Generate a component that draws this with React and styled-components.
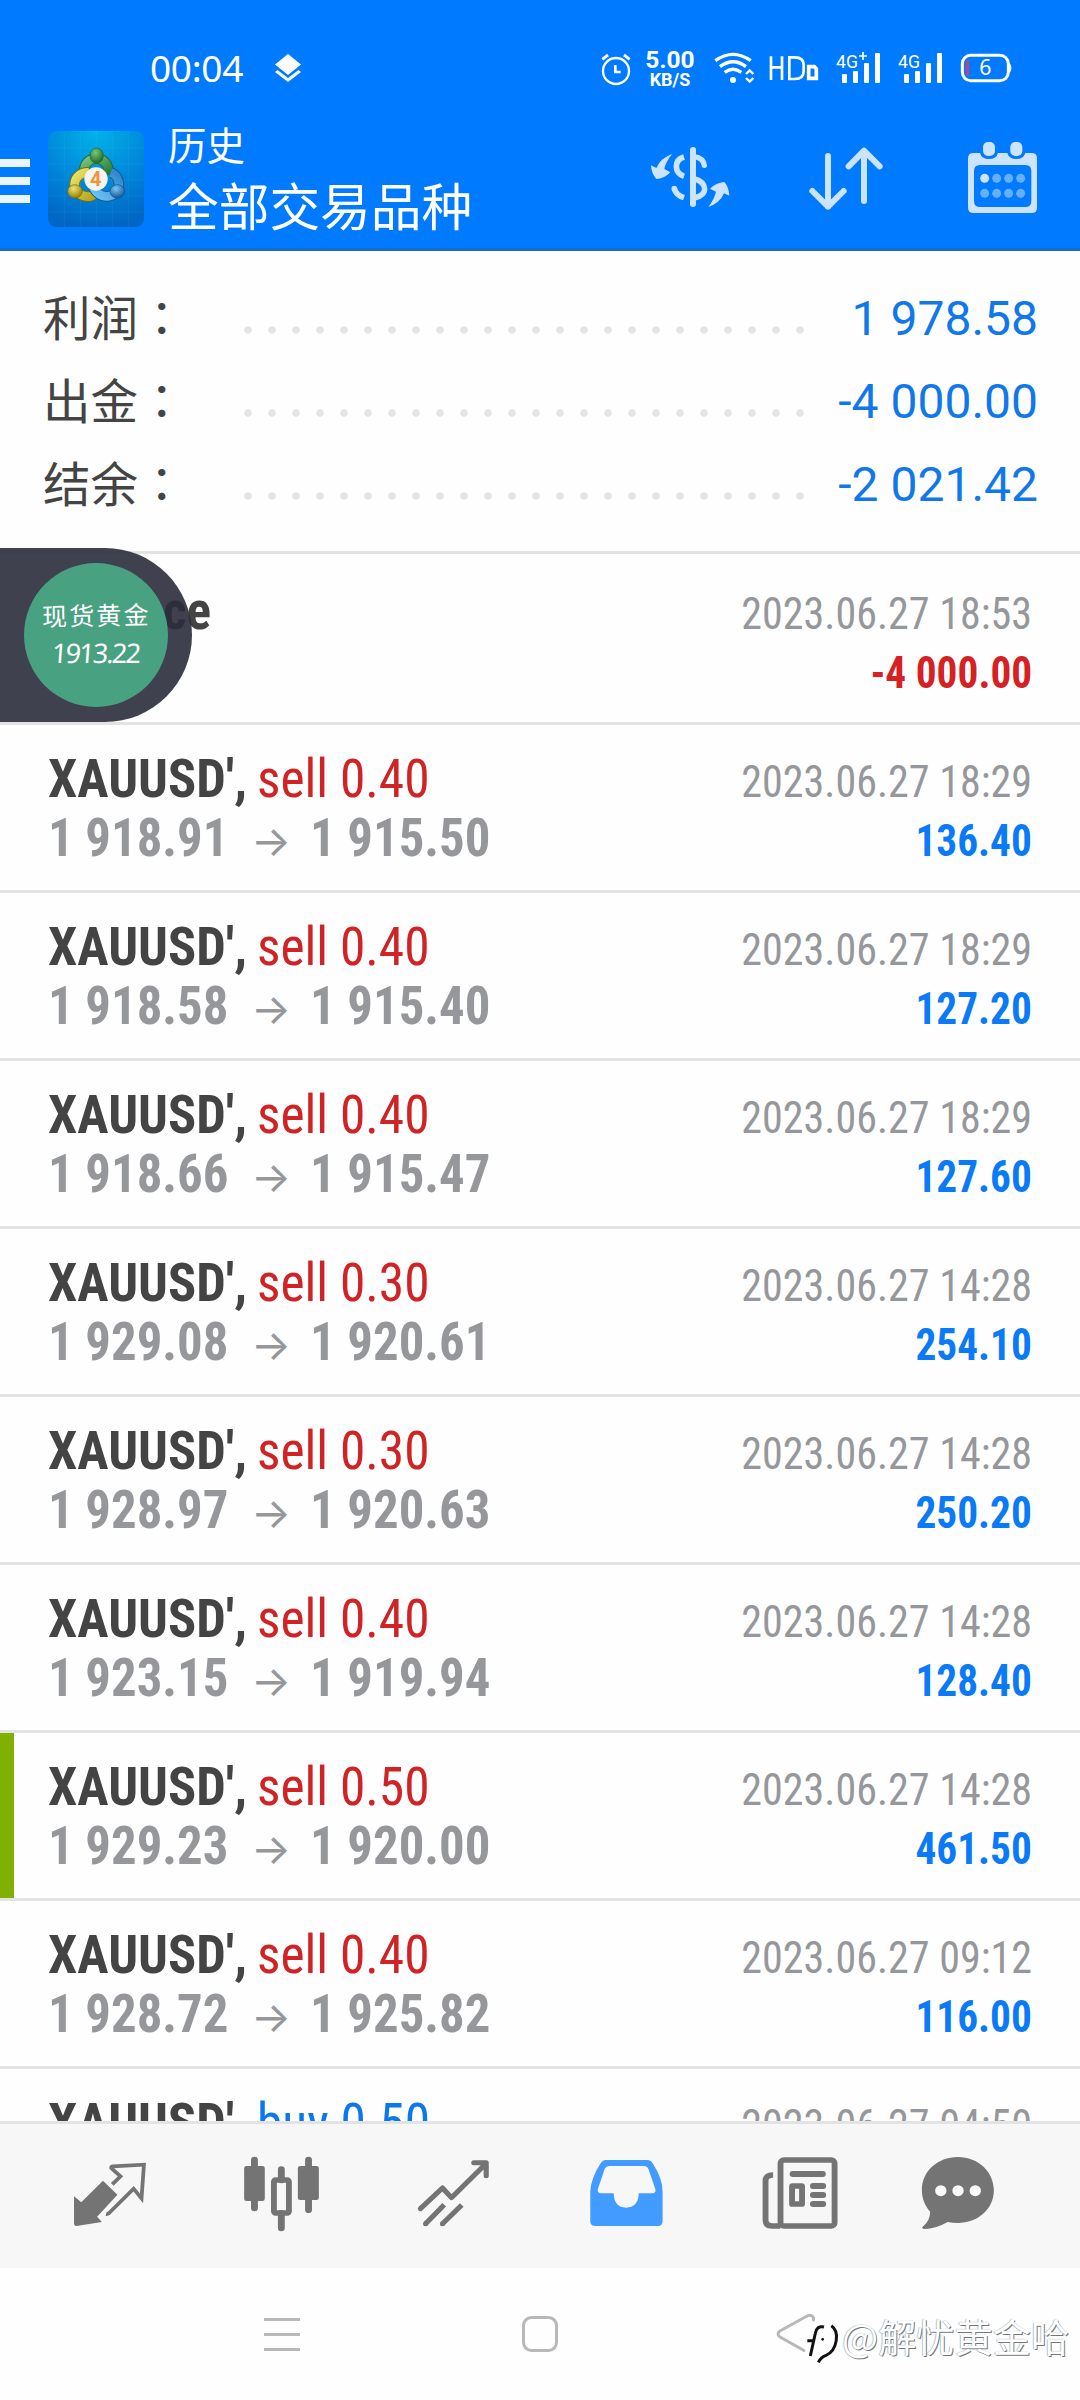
import React from "react";
import styled, { createGlobalStyle } from "styled-components";

const cjk = '"Noto Sans CJK SC", "Noto Sans", sans-serif';
const condensed = '"Roboto Condensed", Roboto, "Noto Sans", sans-serif';

const Global = createGlobalStyle`
  * { box-sizing: border-box; }
  html, body { margin: 0; padding: 0; }
  body { width: 1080px; height: 2400px; overflow: hidden; background: #fdfdfd; }
  svg { display: block; flex: none; }
`;

const Screen = styled.div`
  position: relative;
  width: 1080px;
  height: 2400px;
  display: flex;
  flex-direction: column;
  overflow: hidden;
  background: #fefefe;
  font-family: ${cjk};
`;

/* ---------- header ---------- */
const Header = styled.header`
  flex: none;
  height: 251px;
  background: #007aff;
  border-bottom: 3px solid #1b6cc8;
  color: #fff;
`;

const StatusBar = styled.div`
  height: 104px;
  padding: 40px 60px 0 150px;
  display: flex;
`;

const Clock = styled.div`
  width: 120px;
  font: 400 37px/55px "Noto Sans", sans-serif;
  letter-spacing: -0.3px;
`;

const Spacer = styled.div`
  flex: 1;
`;

const NetSpeed = styled.div`
  width: 64px;
  display: flex;
  flex-direction: column;
  align-items: center;
  padding-top: 8px;
  font-family: Roboto, sans-serif;
  font-weight: 700;
`;

const SpeedValue = styled.span`
  font-size: 24.5px;
  line-height: 23px;
`;

const SpeedUnit = styled.span`
  font-size: 18px;
  line-height: 18px;
`;

const Toolbar = styled.div`
  height: 144px;
  display: flex;
  align-items: flex-start;
`;

const MenuButton = styled.div`
  width: 48px;
  padding-top: 55px;
  display: flex;
  flex-direction: column;
  gap: 10px;
`;

const MenuLine = styled.i`
  width: 30px;
  height: 8px;
  background: #ebf5ff;
`;

const LogoBox = styled.div`
  padding-top: 27px;
  width: 120px;
`;

const Titles = styled.div`
  width: 462px;
  padding-top: 12px;
  display: flex;
  flex-direction: column;
`;

const Caption = styled.span`
  font-size: 38.5px;
  line-height: 55px;
`;

const Title = styled.span`
  font-size: 50.7px;
  line-height: 66px;
`;

/* ---------- summary ---------- */
const Summary = styled.section`
  flex: none;
  height: 303px;
  padding: 26px 42px 0 43px;
  border-bottom: 3px solid #e3e3e4;
`;

const SummaryRow = styled.div`
  height: 83px;
  display: flex;
  align-items: flex-start;
`;

const SummaryLabel = styled.span`
  width: 201px;
  margin-top: -3px;
  color: #444;
  font-size: 47.5px;
  line-height: 83px;
`;

const Colon = styled.span`
  font-family: "Noto Sans CJK TC", sans-serif;
`;

const Leader = styled.div`
  width: 576px;
  height: 8px;
  margin: 49px 0 0 -8px;
  background: radial-gradient(circle at 12px 4px, #e4e4e4 3.4px, transparent 4.1px) 0 0 / 24px 8px repeat-x;
`;

const SummaryValue = styled.span`
  flex: 1;
  text-align: right;
  white-space: nowrap;
  color: #1078ea;
  font: 400 48px/83px Roboto, sans-serif;
`;

/* ---------- deals ---------- */
const Deals = styled.main`
  flex: none;
  height: 1567px;
  overflow: hidden;
`;

const DealRow = styled.div`
  height: ${(p) => (p.$tall ? 171 : 168)}px;
  padding: ${(p) => (p.$tall ? 27 : 24)}px 48px 0 48px;
  border-bottom: 3px solid #e3e3e4;
  display: flex;
  justify-content: space-between;
  white-space: pre;
  font-family: ${condensed};
  font-stretch: 75%;
  ${(p) => p.$marked && "box-shadow: inset 14px 0 0 #80b000;"}
`;

const Column = styled.div`
  display: flex;
  flex-direction: column;
  align-items: ${(p) => (p.$end ? "flex-end" : "flex-start")};
  padding-top: ${(p) => (p.$end ? 3 : 0)}px;
`;

const Line = styled.div`
  height: 59px;
  display: flex;
  align-items: baseline;
  line-height: 59px;
`;

const Narrow = styled.span`
  display: inline-block;
  transform: scaleX(${(p) => p.$fit || 0.94});
  transform-origin: left;
`;

const Symbol = styled(Narrow)`
  width: 209px;
  font-size: 54px;
  font-weight: 700;
  color: #444;
`;

const Side = styled(Narrow)`
  font-size: 54px;
  color: ${(p) => (p.$buy ? "#0b78ee" : "#cf2325")};
`;

const Price = styled(Narrow)`
  width: 184px;
  font-size: 54px;
  font-weight: 700;
  color: #95979b;
`;

const Arrow = styled.span`
  width: 78px;
  text-align: center;
  color: #95979b;
  font-family: Inter, sans-serif;
  font-size: 42px;
`;

const DealTime = styled(Narrow)`
  transform-origin: right;
  font-size: 45px;
  color: #95979b;
`;

const Amount = styled(Narrow)`
  transform-origin: right;
  font-size: 45px;
  font-weight: 700;
  color: ${(p) => (p.$loss ? "#d52123" : "#0a7af6")};
`;

/* ---------- floating quote ---------- */
const QuoteBubble = styled.aside`
  position: absolute;
  left: 0;
  top: 548px;
  width: 192px;
  height: 174px;
  padding: 15px 24px;
  border-radius: 0 87px 87px 0;
  background: rgba(42, 46, 59, 0.9);
`;

const QuoteDisc = styled.div`
  width: 144px;
  height: 144px;
  border-radius: 50%;
  background: #48a181;
  color: #fff;
  display: flex;
  flex-direction: column;
  align-items: center;
  padding-top: 33px;
`;

const QuoteName = styled.span`
  font-size: 25px;
  line-height: 36px;
  letter-spacing: 2.2px;
  transform: rotate(-1deg);
`;

const QuotePrice = styled.span`
  font: 400 27px/42px "Noto Sans", sans-serif;
  letter-spacing: -1.8px;
  transform: skewX(-4deg);
`;

/* ---------- bottom ---------- */
const TabBar = styled.nav`
  flex: none;
  height: 147px;
  border-top: 3px solid #e3e3e4;
  padding-left: 24px;
  background: #f7f7f7;
  color: #747474;
  display: flex;
`;

const SystemBar = styled.nav`
  flex: 1;
  display: flex;
  padding: 45px 0 0 258px;
  gap: 208px;
  color: #b8b8b8;
`;

const Watermark = styled.div`
  position: absolute;
  left: 804px;
  top: 2308px;
  display: flex;
  align-items: center;
  color: #fff;
  font-size: 38.2px;
  line-height: 56px;
  white-space: nowrap;
  text-shadow: 1px 1px 0 #777, -0.5px -0.5px 1px #999;
`;

const Logo = () => (
  <svg width="96" height="96" viewBox="24 18 288 288">
    <defs>
      <radialGradient id="sky" cx="0.5" cy="0" r="1">
        <stop offset="0" stopColor="#00b4e8" />
        <stop offset="0.5" stopColor="#008bdc" />
        <stop offset="1" stopColor="#0066c4" />
      </radialGradient>
      <linearGradient id="green" x1="0" y1="0" x2="1" y2="1">
        <stop offset="0" stopColor="#7cc47a" />
        <stop offset="1" stopColor="#1f7a33" />
      </linearGradient>
      <linearGradient id="yellow" x1="0" y1="0" x2="1" y2="1">
        <stop offset="0" stopColor="#ebe468" />
        <stop offset="1" stopColor="#b3a012" />
      </linearGradient>
      <linearGradient id="blue" x1="1" y1="0" x2="0" y2="1">
        <stop offset="0" stopColor="#2d86cc" />
        <stop offset="1" stopColor="#6fc4f4" />
      </linearGradient>
      <radialGradient id="gh" cx="0.4" cy="0.3" r="0.7"><stop offset="0" stopColor="#7cc777" /><stop offset="1" stopColor="#1d6b2b" /></radialGradient>
      <radialGradient id="yh" cx="0.4" cy="0.3" r="0.7"><stop offset="0" stopColor="#f0e56a" /><stop offset="1" stopColor="#92800d" /></radialGradient>
      <radialGradient id="bh" cx="0.4" cy="0.3" r="0.7"><stop offset="0" stopColor="#7cc6f2" /><stop offset="1" stopColor="#125a9c" /></radialGradient>
    </defs>
    <rect x="24" y="18" width="288" height="288" rx="26" fill="url(#sky)" />
    <path d="M73 18V306M121 18V306M169 18V306M217 18V306M265 18V306M24 69H312M24 117H312M24 165H312M24 213H312M24 261H312" stroke="#8fd4ff" strokeOpacity="0.13" strokeWidth="2" />
    <g fill="none">
      <path d="M133 142C128 88 212 84 206 150" stroke="#1e6a3a" strokeWidth="32" />
      <path d="M133 142C128 88 212 84 206 150" stroke="url(#green)" strokeWidth="26" />
      <path d="M146 142C98 140 86 204 136 214Q156 218 170 202" stroke="#77700f" strokeWidth="32" />
      <path d="M146 142C98 140 86 204 136 214Q156 218 170 202" stroke="url(#yellow)" strokeWidth="26" />
      <path d="M212 142C246 154 246 212 202 214Q176 216 160 188" stroke="#125b98" strokeWidth="32" />
      <path d="M212 142C246 154 246 212 202 214Q176 216 160 188" stroke="url(#blue)" strokeWidth="26" />
    </g>
    <ellipse cx="170" cy="92" rx="20" ry="23" fill="url(#gh)" stroke="#1e6a2e" strokeWidth="2" />
    <ellipse cx="105" cy="199" rx="22" ry="20" fill="url(#yh)" stroke="#776a0c" strokeWidth="2" />
    <ellipse cx="232" cy="199" rx="22" ry="20" fill="url(#bh)" stroke="#124f88" strokeWidth="2" />
    <circle cx="168" cy="162" r="35" fill="#f4f4f2" />
    <text x="167" y="183" textAnchor="middle" fontFamily="Roboto, sans-serif" fontWeight="700" fontSize="60" fill="#f0953c">4</text>
  </svg>
);

/* Status glyphs share one 3:1 drawing grid, 192 units high. */
const StatusGlyph = ({ x, w, children }) => (
  <svg width={w} height="64" viewBox={`${(x - 590) * 3} 0 ${w * 3} 192`} fill="none" stroke="#fff">
    {children}
  </svg>
);

const Bars = ({ x }) => (
  <g fill="#fff" stroke="none">
    <rect x={x} y="102" width="15" height="27" rx="3" />
    <rect x={x + 33} y="93" width="15" height="36" rx="3" />
    <rect x={x + 66} y="69" width="15" height="60" rx="3" />
    <rect x={x + 99} y="39" width="15" height="90" rx="3" />
  </g>
);

const ActionGlyph = ({ x, w, children }) => (
  <svg width={w} height="144" viewBox={`${(x - 590) * 3} 192 ${w * 3} 432`} fill="none" stroke="#cce4ff">
    {children}
  </svg>
);

/* Tab glyphs: 172 x 144 tiles on a 499.5 x 432 grid. */
const Tab = ({ x, color = "#747474", children }) => (
  <svg width="172" height="144" viewBox={`${x} 222 499.5 432`} preserveAspectRatio="none" fill="none" stroke={color} color={color}>
    {children}
  </svg>
);

const summary = [
  ["利润", "1 978.58"],
  ["出金", "-4 000.00"],
  ["结余", "-2 021.42"],
];

const deals = [
  ["sell 0.40", "1 918.91", "1 915.50", "2023.06.27 18:29", "136.40"],
  ["sell 0.40", "1 918.58", "1 915.40", "2023.06.27 18:29", "127.20"],
  ["sell 0.40", "1 918.66", "1 915.47", "2023.06.27 18:29", "127.60"],
  ["sell 0.30", "1 929.08", "1 920.61", "2023.06.27 14:28", "254.10"],
  ["sell 0.30", "1 928.97", "1 920.63", "2023.06.27 14:28", "250.20"],
  ["sell 0.40", "1 923.15", "1 919.94", "2023.06.27 14:28", "128.40"],
  ["sell 0.50", "1 929.23", "1 920.00", "2023.06.27 14:28", "461.50"],
  ["sell 0.40", "1 928.72", "1 925.82", "2023.06.27 09:12", "116.00"],
  ["buy 0.50", "", "", "2023.06.27 04:50", ""],
];

export default function App() {
  return (
    <Screen>
      <Global />
      <Header>
        <StatusBar>
          <Clock>00:04</Clock>
          <svg width="36" height="64" viewBox="0 0 36 64" fill="#fff">
            <path d="M18 14L31 24.5L18 35L5 24.5Z" />
            <path d="M5 32L7.5 30L18 38L28.500 30L31 32L18 42Z" />
          </svg>
          <Spacer />
          <StatusGlyph x={596} w={42}>
            <circle cx="78" cy="93" r="39" strokeWidth="7" />
            <path d="M37 58L54 45M119 58L102 45" strokeWidth="9" />
            <path d="M76 75V96H92" strokeWidth="8" />
          </StatusGlyph>
          <NetSpeed>
            <SpeedValue>5.00</SpeedValue>
            <SpeedUnit>KB/S</SpeedUnit>
          </NetSpeed>
          <StatusGlyph x={702} w={62}>
            <path d="M376 62Q429 24 482 62M390 80Q429 50 468 80M404 97Q429 78 454 97" strokeWidth="10" />
            <circle cx="429" cy="120" r="9" fill="#fff" stroke="none" />
            <path d="M468 102L479 91L490 102M468 114L479 125L490 114" strokeWidth="7" />
          </StatusGlyph>
          <StatusGlyph x={764} w={66}>
            <path d="M543 49V120M576 49V120M543 82H576M598 52V117H614Q641 117 641 94V75Q641 52 614 52Z" strokeWidth="8" />
            <path d="M656 80H673L679 86V115H656Z" strokeWidth="11" />
          </StatusGlyph>
          <StatusGlyph x={830} w={62}>
            <text x="738" y="83" fontFamily="Roboto, sans-serif" fontSize="57" textLength="66" lengthAdjust="spacingAndGlyphs" fill="#fff" stroke="none">4G</text>
            <path d="M807 48H831M819 36V60" strokeWidth="5" />
            <Bars x={756} />
          </StatusGlyph>
          <StatusGlyph x={892} w={60}>
            <text x="924" y="83" fontFamily="Roboto, sans-serif" fontSize="57" textLength="66" lengthAdjust="spacingAndGlyphs" fill="#fff" stroke="none">4G</text>
            <Bars x={942} />
          </StatusGlyph>
          <StatusGlyph x={952} w={68}>
            <rect x="1117" y="46" width="138" height="76" rx="25" strokeWidth="9" />
            <path d="M1137 58Q1126 61 1126 72V96Q1126 107 1137 110Z" fill="#a84a86" stroke="none" />
            <path d="M1257 70Q1264 72 1264 84Q1264 96 1257 98Z" fill="#fff" stroke="none" />
            <text x="1186" y="106" textAnchor="middle" fontFamily="Noto Sans, sans-serif" fontSize="64" fill="#fff" stroke="none">6</text>
          </StatusGlyph>
        </StatusBar>
        <Toolbar>
          <MenuButton>
            <MenuLine />
            <MenuLine />
            <MenuLine />
          </MenuButton>
          <LogoBox>
            <Logo />
          </LogoBox>
          <Titles>
            <Caption>历史</Caption>
            <Title>全部交易品种</Title>
          </Titles>
          <ActionGlyph x={630} w={120}>
            <path d="M309 330V492" strokeWidth="18" strokeLinecap="round" />
            <path d="M282 351Q259 358 259 379Q259 401 282 409M253 446Q258 465 282 473" strokeWidth="17" />
            <circle cx="253" cy="446" r="8.500" fill="#cce4ff" stroke="none" />
            <path d="M312 350Q340 354 343 376" strokeWidth="16" strokeLinecap="round" />
            <path d="M312 416Q343 424 344 447Q344 466 313 474" strokeWidth="17" />
            <path d="M246 342Q226 368 223 387L241 397Q222 417 199 417Q184 400 183 376L199 384Q212 354 246 342Z" fill="#cce4ff" stroke="none" />
            <path d="M355 501Q373 477 378 455L360 446Q378 428 403 426Q416 440 418 467L402 460Q390 489 355 501Z" fill="#cce4ff" stroke="none" />
          </ActionGlyph>
          <ActionGlyph x={750} w={180}>
            <path d="M714 348V500M667 453L714 500L761 453M822 483V332M776 379L822 332L869 379" strokeWidth="18" strokeLinecap="round" strokeLinejoin="round" />
          </ActionGlyph>
          <ActionGlyph x={930} w={150}>
            <path d="M1151 339H1170Q1175 357 1197 357Q1219 357 1224 339H1252Q1257 357 1279 357Q1301 357 1306 339H1325Q1341 339 1341 355V503Q1341 519 1325 519H1151Q1134 519 1134 503V355Q1134 339 1151 339ZM1170 375Q1152 375 1152 393V483Q1152 501 1170 501H1306Q1324 501 1324 483V393Q1324 375 1306 375Z" fill="#cce4ff" fillRule="evenodd" stroke="none" />
            <rect x="1179" y="306" width="36" height="42" rx="15" fill="#cce4ff" stroke="none" />
            <rect x="1261" y="306" width="36" height="42" rx="15" fill="#cce4ff" stroke="none" />
            {[0, 1, 2, 3, 4, 5, 6, 7].map((i) => (
              <circle key={i} cx={1184 + (i % 4) * 36} cy={i < 4 ? 415 : 460} r="13.5" fill={i ? "#66afff" : "#cce4ff"} stroke="none" />
            ))}
          </ActionGlyph>
        </Toolbar>
      </Header>

      <Summary>
        {summary.map(([label, value]) => (
          <SummaryRow key={label}>
            <SummaryLabel>{label}<Colon lang="zh-TW">：</Colon></SummaryLabel>
            <Leader />
            <SummaryValue>{value}</SummaryValue>
          </SummaryRow>
        ))}
      </Summary>

      <Deals>
        <DealRow $tall>
          <Column>
            <Line><Symbol $fit={0.948}>Balance</Symbol></Line>
          </Column>
          <Column $end>
            <Line><DealTime $fit={0.935}>2023.06.27 18:53</DealTime></Line>
            <Line><Amount $loss $fit={0.918}>-4 000.00</Amount></Line>
          </Column>
        </DealRow>
        {deals.map(([side, from, to, time, amount], i) => (
          <DealRow key={i} $marked={i === 6}>
            <Column>
              <Line>
                <Symbol $fit={0.97}>XAUUSD',</Symbol>
                <Side $fit={0.952} $buy={side.startsWith("buy")}>{side}</Side>
              </Line>
              {from && (
                <Line>
                  <Price>{from}</Price>
                  <Arrow>→</Arrow>
                  <Price>{to}</Price>
                </Line>
              )}
            </Column>
            <Column $end>
              <Line><DealTime $fit={0.935}>{time}</DealTime></Line>
              {amount && <Line><Amount $fit={0.918}>{amount}</Amount></Line>}
            </Column>
          </DealRow>
        ))}
      </Deals>

      <TabBar>
        <Tab x={69.7}>
          <path d="M215 439L236 457L299 392L341 434L282 500L296 516L222 528Q215 528 215 520Z" fill="currentColor" stroke="none" />
          <path d="M326 403L350 379L323 354Q322 350 327 349L418 344L411 445L388 416L317 489Q312 493 308 492" strokeWidth="11" strokeLinejoin="miter" />
        </Tab>
        <Tab x={569.2}>
          <path d="M739 330V474M896 330V479M817 359V390M817 490V534" strokeWidth="20" strokeLinecap="round" />
          <rect x="709" y="348" width="60" height="105" rx="7" fill="currentColor" stroke="none" />
          <rect x="865" y="348" width="61" height="102" rx="7" fill="currentColor" stroke="none" />
          <rect x="795.500" y="390" width="43.500" height="99" rx="5" strokeWidth="17" />
        </Tab>
        <Tab x={1068.7}>
          <path d="M1221 476L1285 414L1311 443L1411 341M1376 338H1412V377" strokeWidth="15" strokeLinecap="round" strokeLinejoin="round" />
          <path d="M1290 464L1236 521M1341 465L1285 521" strokeWidth="15" />
          <circle cx="1236" cy="521" r="7.500" fill="currentColor" stroke="none" />
          <circle cx="1285" cy="521" r="7.500" fill="currentColor" stroke="none" />
        </Tab>
        <Tab x={0} color="#429bff">
          <path d="M190 330H312Q321 330 327 340Q356 385 356 425V514Q356 528 342 528H160Q146 528 146 514V425Q148 385 176 340Q182 330 190 330ZM201 348Q192 348 188 356L168 417Q166 430 178 430H214Q215 473 250 473Q285 473 287 430H325Q338 430 335 417L315 358Q312 348 300 348Z" fill="currentColor" fillRule="evenodd" stroke="none" />
        </Tab>
        <Tab x={499.5}>
          <path d="M698 528H674Q655 528 655 510V392Q655 375 677 375" strokeWidth="17" />
          <rect x="698.500" y="330" width="157" height="198" rx="10" strokeWidth="17" />
          <path d="M734 372H821M793 408H822M793 435H822M793 462H822" strokeWidth="18" strokeLinecap="round" />
          <rect x="732" y="408" width="29" height="54" rx="1" strokeWidth="17" strokeLinejoin="round" />
        </Tab>
        <Tab x={999}>
          <path d="M1213 321C1274 321 1318 366 1318 421C1318 479 1270 519 1214 519Q1198 519 1184 516Q1146 538 1115 537Q1106 534 1113 529Q1133 510 1133 485C1118 467 1109 447 1109 420C1109 364 1155 321 1213 321Z" fill="currentColor" stroke="none" />
          <g fill="#fafafa" stroke="none">
            <circle cx="1164" cy="422" r="16.500" />
            <circle cx="1214" cy="422" r="16.500" />
            <circle cx="1264" cy="422" r="16.500" />
          </g>
        </Tab>
      </TabBar>

      <SystemBar>
        <svg width="48" height="44" viewBox="0 0 48 44" stroke="currentColor" strokeWidth="3">
          <path d="M6 6.500H42M6 21.500H42M6 36.500H42" />
        </svg>
        <svg width="48" height="44" viewBox="0 0 48 44" fill="none" stroke="currentColor" strokeWidth="3">
          <rect x="9.500" y="4.500" width="33" height="33" rx="8" />
        </svg>
        <svg width="48" height="44" viewBox="0 0 48 44" fill="none" stroke="currentColor" strokeWidth="3" strokeLinecap="round">
          <path d="M43.500 7V5Q42 1 37 3L10 18Q6 21 10 24L34 37.500" />
        </svg>
      </SystemBar>

      <QuoteBubble>
        <QuoteDisc>
          <QuoteName>现货黄金</QuoteName>
          <QuotePrice>1913.22</QuotePrice>
        </QuoteDisc>
      </QuoteBubble>

      <Watermark>
        <svg width="38" height="56" viewBox="108 24 114 168" fill="none">
          <path d="M186 76C216 80 208 150 176 164Q158 170 152 186M168 84Q148 80 144 104L132 168M118 122H160" stroke="#fff" strokeWidth="16" />
          <path d="M168 81Q146 76 142 100L127 168M118 122H136M190 77C216 94 208 152 174 166Q158 172 151 187" stroke="#111" strokeWidth="9" />
          <circle cx="164" cy="118" r="4" fill="#111" />
        </svg>
        @解忧黄金哈
      </Watermark>
    </Screen>
  );
}
